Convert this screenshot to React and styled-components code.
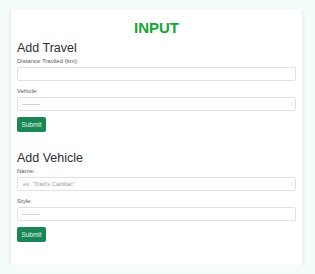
import React from "react";
import styled, { createGlobalStyle } from "styled-components";

const GlobalStyle = createGlobalStyle`
  body {
    margin: 0;
    background-color: #f4fdf7;
    font-family: "Liberation Sans", Arial, sans-serif;
  }
`;

const Page = styled.div`
  padding: 9px 13px 0 11px;
`;

const Card = styled.main`
  background-color: #ffffff;
  box-shadow: 0 1px 4px rgba(0, 0, 0, 0.12);
  border-radius: 2px;
  padding: 10px 6px 24px;
  height: 256px;
  box-sizing: border-box;
`;

const Title = styled.h1`
  margin: 0;
  text-align: center;
  color: #13a634;
  font-size: 15px;
  line-height: 18px;
  font-weight: 700;
`;

const Form = styled.form`
  display: flex;
  flex-direction: column;
  margin-top: ${({ $top }) => $top}px;
`;

const Heading = styled.h2`
  margin: 0 0 2px;
  color: #2b2f33;
  font-size: 12.5px;
  line-height: 14px;
  font-weight: 400;
`;

const Label = styled.label`
  display: block;
  color: #555b60;
  font-size: 6px;
  line-height: 8px;
  margin-bottom: 2px;
`;

const Field = styled.div`
  margin-bottom: 6px;
`;

const TextInput = styled.input`
  display: block;
  width: 100%;
  box-sizing: border-box;
  height: 14px;
  padding: 0 5px;
  border: 1px solid #dee2e6;
  border-radius: 2px;
  font-family: inherit;
  font-size: 6px;
  color: #212529;
  background: #fff;
  outline: none;

  &::placeholder {
    color: #9aa0a6;
  }
`;

const Select = styled.select`
  display: block;
  width: 100%;
  box-sizing: border-box;
  height: 14px;
  padding: 0 4px;
  border: 1px solid #dee2e6;
  border-radius: 2px;
  font-family: inherit;
  font-size: 6px;
  color: #6c757d;
  background: #fff;
  appearance: none;
  outline: none;
`;

const Button = styled.button`
  align-self: flex-start;
  width: 29px;
  height: 15px;
  padding: 0;
  border: none;
  border-radius: 2px;
  background-color: #198754;
  color: #e8f3ec;
  font-family: inherit;
  font-size: 6.5px;
`;

const App = () => (
  <>
    <GlobalStyle />
    <Page>
      <Card>
        <Title>INPUT</Title>
        <Form $top={4} onSubmit={(e) => e.preventDefault()}>
          <Heading>Add Travel</Heading>
          <Field>
            <Label htmlFor="distance">Distance Travlled (km):</Label>
            <TextInput id="distance" type="text" />
          </Field>
          <Field>
            <Label htmlFor="vehicle">Vehicle:</Label>
            <Select id="vehicle" defaultValue="">
              <option value="">---------</option>
            </Select>
          </Field>
          <Button type="submit">Submit</Button>
        </Form>
        <Form $top={19} onSubmit={(e) => e.preventDefault()}>
          <Heading>Add Vehicle</Heading>
          <Field>
            <Label htmlFor="name">Name:</Label>
            <TextInput id="name" type="text" placeholder={'ex. "Dad\'s Cadillac"'} />
          </Field>
          <Field>
            <Label htmlFor="style">Style:</Label>
            <Select id="style" defaultValue="">
              <option value="">---------</option>
            </Select>
          </Field>
          <Button type="submit">Submit</Button>
        </Form>
      </Card>
    </Page>
  </>
);

export default App;
